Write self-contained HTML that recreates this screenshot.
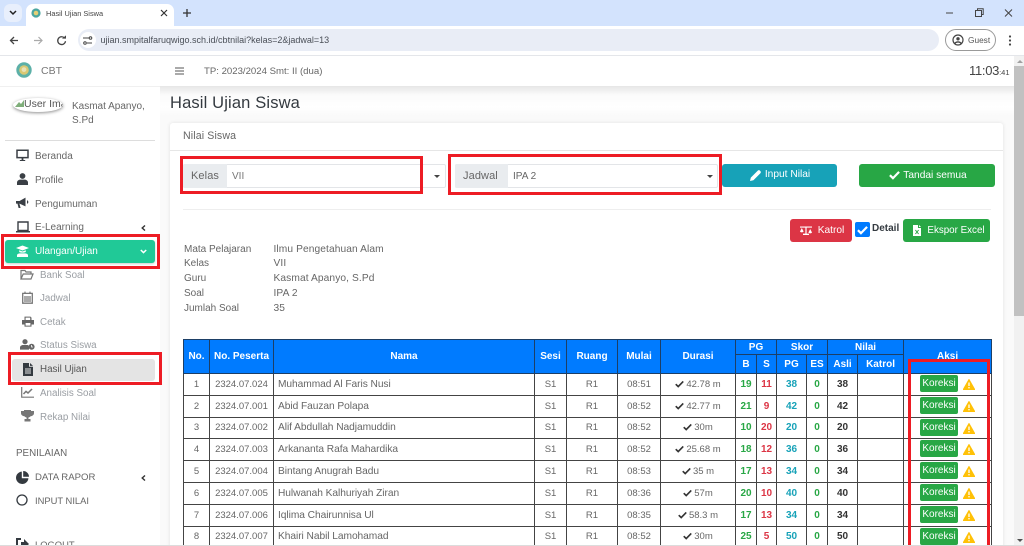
<!DOCTYPE html>
<html lang="id"><head><meta charset="utf-8"><title>Hasil Ujian Siswa</title>
<style>
*{box-sizing:border-box}
html,body{margin:0;padding:0;width:1024px;height:546px;overflow:hidden;background:#fff;font-family:"Liberation Sans",sans-serif;color:#6c757d;font-size:10.5px}
#p{position:absolute;left:0;top:0;width:1024px;height:546px;overflow:hidden;contain:paint}
.a{position:absolute;white-space:nowrap}
.r{position:absolute;border:3px solid #ed1c24;z-index:5}
svg{display:block}
.a svg{position:absolute}
.nav{position:absolute;left:35px;font-size:10px;color:#666;white-space:nowrap}
.sub{position:absolute;left:40px;font-size:9.8px;color:#9a9ea3;white-space:nowrap}
.ic{position:absolute}
table{border-collapse:collapse;table-layout:fixed;width:808px;position:absolute;left:183px;top:339px;background:#fff}
td,th{border:1px solid #444;padding:0;text-align:center;font-size:9.5px;white-space:nowrap;overflow:hidden}
th{background:#007bff;color:#fff;font-weight:bold;border-color:#1d3f66;font-size:10px}
tbody tr{height:21.8px}
td{color:#666}
td.n{text-align:left;padding-left:4px;font-size:10.2px;letter-spacing:-.05px}
td b{font-size:10px}
.g{color:#28a745}.d{color:#dc3545}.t{color:#17a2b8}.k{color:#333}
.ck{display:inline-block;vertical-align:-1px;margin-right:2px}
.ak{position:relative}
.ko{position:absolute;left:16px;top:1px;width:38px;height:17px;background:#28a745;border-radius:2px;color:#fff;font-size:10px;line-height:17px;text-align:center}
.wa{position:absolute;left:59px;top:5px}
.btn{position:absolute;border-radius:3px;color:#fff;font-size:10.2px;text-align:center;white-space:nowrap}
</style></head><body>
<div id="p">
<svg width="0" height="0" style="position:absolute"><defs>
<symbol id="c" viewBox="0 0 12 10"><path d="M1 5.2 4.3 8.5 11 1.6" fill="none" stroke="#333" stroke-width="2.2"/></symbol>
<symbol id="w" viewBox="0 0 12 11"><path d="M6 .5 11.8 10.6H.2Z" fill="#ffc107" stroke="#ffc107" stroke-linejoin="round"/><path d="M6 3.5V7M6 8V9.4" stroke="#fff" stroke-width="1.3"/></symbol>
</defs></svg>

<!-- browser chrome -->
<div class="a" style="left:0;top:0;width:1024px;height:26px;background:#d3e3fd"></div>
<div class="a" style="left:4px;top:4px;width:18px;height:18px;background:#e8effc;border-radius:6px"></div>
<svg class="a" style="left:9px;top:10px" width="8" height="6" viewBox="0 0 8 6"><path d="M1 1 4 4 7 1" fill="none" stroke="#222" stroke-width="1.5"/></svg>
<div class="a" style="left:26px;top:4px;width:148px;height:23px;background:#fff;border-radius:7px 7px 0 0"></div>
<svg class="a" style="left:31px;top:8px" width="10" height="10" viewBox="0 0 10 10"><circle cx="5" cy="5" r="4.6" fill="#4aa6a0"/><circle cx="5" cy="5" r="2.3" fill="#e4cf74"/></svg>
<div class="a" style="left:46px;top:8.5px;font-size:7.4px;color:#444">Hasil Ujian Siswa</div>
<svg class="a" style="left:160px;top:9px" width="8" height="8" viewBox="0 0 8 8"><path d="M1 1 7 7M7 1 1 7" stroke="#333" stroke-width="1.2"/></svg>
<svg class="a" style="left:183px;top:9px" width="8" height="8" viewBox="0 0 8 8"><path d="M4 0V8M0 4H8" stroke="#333" stroke-width="1.3"/></svg>
<svg class="a" style="left:946px;top:8px" width="70" height="10" viewBox="0 0 70 10"><path d="M0 5H7" stroke="#444" stroke-width="1"/><path d="M29.5 2.5H35.5V8.5H29.5ZM31.5 2.5V.8H37.2V6.5H35.5" fill="none" stroke="#444" stroke-width="1"/><path d="M59 1.5 66 8.5M66 1.5 59 8.5" stroke="#444" stroke-width="1"/></svg>
<div class="a" style="left:0;top:26px;width:1024px;height:29px;background:#fff;border-radius:8px 8px 0 0"></div>
<div class="a" style="left:0;top:55px;width:1024px;height:1px;background:#e4e6ea"></div>
<svg class="a" style="left:9px;top:35px" width="60" height="11" viewBox="0 0 60 11"><path d="M9 5.5H1.5M5 2 1.5 5.5 5 9" fill="none" stroke="#444" stroke-width="1.3"/><path d="M25 5.5H33M29.5 2 33 5.5 29.5 9" fill="none" stroke="#aaa" stroke-width="1.2"/><path d="M55.5 3A3.9 3.9 0 1 0 56.5 6.2" fill="none" stroke="#444" stroke-width="1.3"/><path d="M53 3.6H57V.4Z" fill="#444"/></svg>
<div class="a" style="left:78px;top:29px;width:861px;height:22px;background:#e9edf6;border-radius:11px"></div>
<div class="a" style="left:80px;top:32px;width:16px;height:16px;background:#fff;border-radius:50%"></div>
<svg class="a" style="left:83px;top:36px" width="10" height="9" viewBox="0 0 10 9"><path d="M0 2H6M9 7H4" stroke="#444" stroke-width="1"/><circle cx="7.5" cy="2" r="1.3" fill="none" stroke="#444"/><circle cx="2" cy="7" r="1.3" fill="none" stroke="#444"/></svg>
<div class="a" style="left:100.5px;top:35px;font-size:9px;color:#4a4f57">ujian.smpitalfaruqwigo.sch.id/cbtnilai?kelas=2&amp;jadwal=13</div>
<div class="a" style="left:945px;top:29px;width:51px;height:22px;border:1px solid #9a9a9a;border-radius:11px"></div>
<svg class="a" style="left:952px;top:34px" width="12" height="12" viewBox="0 0 12 12"><circle cx="6" cy="6" r="5" fill="none" stroke="#444" stroke-width="1.2"/><circle cx="6" cy="4.8" r="1.7" fill="#444"/><path d="M2.8 9.6C4 7.4 8 7.4 9.2 9.6" fill="none" stroke="#444" stroke-width="1.3"/></svg>
<div class="a" style="left:968px;top:35px;font-size:8.3px;color:#555">Guest</div>
<svg class="a" style="left:1008px;top:35px" width="4" height="11" viewBox="0 0 4 11"><circle cx="2" cy="1.5" r="1.1" fill="#444"/><circle cx="2" cy="5.5" r="1.1" fill="#444"/><circle cx="2" cy="9.5" r="1.1" fill="#444"/></svg>

<!-- content background -->
<div class="a" style="left:160px;top:86px;width:854px;height:460px;background:#fafafa"></div>
<div class="a" style="left:160px;top:86px;width:854px;height:30px;background:linear-gradient(#e6e6e6,#fbfbfb 30%,#fff 70%,#fafafa)"></div>

<!-- sidebar bg -->
<div class="a" style="left:0;top:56px;width:160px;height:490px;background:#fff"></div>

<!-- navbar -->
<div class="a" style="left:0;top:56px;width:1014px;height:30px;background:#fff"></div>
<svg class="a" style="left:16px;top:62px" width="16" height="16" viewBox="0 0 16 16"><circle cx="8" cy="8" r="7.7" fill="#5cb0a8"/><circle cx="8" cy="8" r="4.8" fill="#d9c873"/><circle cx="8" cy="7.6" r="2.4" fill="#e7e2b8"/></svg>
<div class="a" style="left:41px;top:64.5px;font-size:10.5px;color:#777">CBT</div>
<svg class="a" style="left:175px;top:67px" width="9" height="8" viewBox="0 0 9 8"><path d="M0 1H9M0 4H9M0 7H9" stroke="#777" stroke-width="1.2"/></svg>
<div class="a" style="left:204px;top:65.5px;font-size:9.6px;color:#666">TP: 2023/2024 Smt: II (dua)</div>
<div class="a" style="left:969px;top:63px;font-size:13px;letter-spacing:-.3px;color:#444">11:03<span style="font-size:7.5px;letter-spacing:0">:41</span></div>

<!-- sidebar -->
<div class="a" style="left:0;top:86px;width:160px;height:1px;background:#f0f0f0"></div>
<div class="a" style="left:13px;top:98px;width:50px;height:14px;border-radius:50%/50%;box-shadow:0 1px 3px rgba(0,0,0,.45);overflow:hidden;background:#fff;font-size:10.5px;line-height:12px;color:#555;padding-left:11px">User Image</div>
<svg class="a" style="left:15px;top:100px" width="9" height="7" viewBox="0 0 9 7"><path d="M0 7 4 2 6 4 9 0V7Z" fill="#7fae7a"/></svg>
<div class="a" style="left:72px;top:100px;font-size:10px;line-height:13.5px;color:#666">Kasmat Apanyo,<br>S.Pd</div>
<div class="a" style="left:5px;top:140px;width:150px;height:1px;background:#ddd"></div>

<svg class="ic" style="left:16px;top:149px" width="13" height="13" viewBox="0 0 13 13"><path d="M1 1.2H12V8.6H1Z" fill="none" stroke="#3a3f45" stroke-width="1.5"/><path d="M5.6 9V11H3.8V12H9.2V11H7.4V9Z" fill="#3a3f45"/></svg>
<div class="nav" style="top:151px">Beranda</div>
<svg class="ic" style="left:17px;top:173px" width="11" height="12" viewBox="0 0 11 12"><circle cx="5.5" cy="3" r="2.9" fill="#3a3f45"/><path d="M0 12V9.5C0 7.5 2 6.6 3.5 6.6H7.5C9 6.6 11 7.5 11 9.5V12Z" fill="#3a3f45"/></svg>
<div class="nav" style="top:175px">Profile</div>
<svg class="ic" style="left:16px;top:197px" width="13" height="12" viewBox="0 0 13 12"><path d="M0 4H3.5L9.5 .6V9.4L3.5 6.6H3.4L4.6 11H2.6L1.5 6.6H0Z M11 3.2C12.8 3.8 12.8 6.2 11 6.8Z" fill="#3a3f45"/></svg>
<div class="nav" style="top:199px">Pengumuman</div>
<svg class="ic" style="left:16px;top:221px" width="14" height="12" viewBox="0 0 14 12"><path d="M2 1H12V9.4H2Z" fill="none" stroke="#3a3f45" stroke-width="1.4"/><path d="M0 10H14V11.5H0Z" fill="#3a3f45"/></svg>
<div class="nav" style="top:222px">E-Learning</div>
<svg class="ic" style="left:141px;top:225px" width="5" height="6" viewBox="0 0 5 6"><path d="M4 .5 1.2 3 4 5.5" fill="none" stroke="#333" stroke-width="1.4"/></svg>

<div class="a" style="left:5px;top:240px;width:150px;height:23px;background:#20c997;border-radius:3px;box-shadow:0 1px 2px rgba(0,0,0,.2)"></div>
<svg class="ic" style="left:16px;top:245px" width="13" height="12" viewBox="0 0 13 12"><path d="M6.5 .5 13 3 6.5 5.5 0 3Z" fill="#fff"/><path d="M3.2 5.2V6.6C3.2 8 9.8 8 9.8 6.6V5.2L6.5 6.5Z" fill="#fff"/><path d="M1 12V10.2C1 9 3 8.4 4 8.4H9C10 8.4 12 9 12 10.2V12Z" fill="#fff"/></svg>
<div class="nav" style="top:245.5px;color:#fff">Ulangan/Ujian</div>
<svg class="ic" style="left:140px;top:249px" width="7" height="5" viewBox="0 0 7 5"><path d="M.8 1 3.5 3.6 6.2 1" fill="none" stroke="#fff" stroke-width="1.5"/></svg>
<div class="r" style="left:1px;top:234px;width:159px;height:35px"></div>

<svg class="ic" style="left:20px;top:269px" width="14" height="11" viewBox="0 0 14 11"><path d="M1 10V1.5H5L6 3H11V5M1 10 3.2 5H13L11 10Z" fill="none" stroke="#777" stroke-width="1.2"/></svg>
<div class="sub" style="top:270px">Bank Soal</div>
<svg class="ic" style="left:22px;top:291px" width="11" height="13" viewBox="0 0 11 13"><path d="M.7 2.4H10.3V12.2H.7Z" fill="none" stroke="#777" stroke-width="1.3"/><path d="M3 .6V3M8 .6V3M2 6H9M2 8H9M2 10H9" stroke="#777" stroke-width="1.2"/></svg>
<div class="sub" style="top:293px">Jadwal</div>
<svg class="ic" style="left:22px;top:316px" width="12" height="11" viewBox="0 0 12 11"><path d="M2.5 4V.6H8.5L9.5 1.6V4H12V8.5H9.5V10.6H2.5V8.5H0V4Z" fill="#666"/><path d="M3.6 1.6H8.2V4H3.6ZM3.6 7H8.4V9.6H3.6Z" fill="#fff"/></svg>
<div class="sub" style="top:317px">Cetak</div>
<svg class="ic" style="left:20px;top:339px" width="15" height="11" viewBox="0 0 15 11"><circle cx="5" cy="2.7" r="2.6" fill="#666"/><path d="M0 10.6V8.4C0 6.8 2 6 3 6H7.4C8.6 6 9 7 9 8V10.6Z" fill="#666"/><circle cx="11.6" cy="7.8" r="3" fill="#666"/><path d="M11.6 6V8H13" stroke="#fff" stroke-width=".8" fill="none"/></svg>
<div class="sub" style="top:340px">Status Siswa</div>

<div class="a" style="left:12px;top:359px;width:143px;height:22px;background:#e4e4e4;border-radius:3px"></div>
<svg class="ic" style="left:23px;top:363px" width="10" height="13" viewBox="0 0 10 13"><path d="M0 0H6V3.8H10V13H0ZM7 0 10 2.9H7Z" fill="#343a40"/><path d="M2 6H8M2 8H8M2 10H8" stroke="#e4e4e4" stroke-width=".9"/></svg>
<div class="sub" style="top:364px;color:#555">Hasil Ujian</div>
<div class="r" style="left:8px;top:352px;width:154px;height:33px"></div>

<svg class="ic" style="left:21px;top:387px" width="13" height="11" viewBox="0 0 13 11"><path d="M.7 0V10.2H13" fill="none" stroke="#777" stroke-width="1.2"/><path d="M2.5 7 5 4.4 7 6 11 2" fill="none" stroke="#777" stroke-width="1.5"/></svg>
<div class="sub" style="top:388px">Analisis Soal</div>
<svg class="ic" style="left:21px;top:410px" width="13" height="12" viewBox="0 0 13 12"><path d="M3 0H10V1H13V3C13 5 11.5 6 9.6 6.3 9 7.2 8 7.4 7.4 7.6V9H9.5V11.5H3.5V9H5.6V7.6C5 7.4 4 7.2 3.4 6.3 1.5 6 0 5 0 3V1H3Z" fill="#777"/></svg>
<div class="sub" style="top:412px">Rekap Nilai</div>

<div class="a" style="left:16px;top:448px;font-size:9.8px;color:#666">PENILAIAN</div>
<svg class="ic" style="left:16px;top:471px" width="13" height="13" viewBox="0 0 13 13"><path d="M5.8 .6V7.2H12.4A6.2 6.2 0 1 1 5.8 .6Z" fill="#343a40"/><path d="M7.2 0A5.8 5.8 0 0 1 13 5.8H7.2Z" fill="#343a40"/></svg>
<div class="nav" style="top:472px;font-size:9.6px">DATA RAPOR</div>
<svg class="ic" style="left:141px;top:475px" width="5" height="6" viewBox="0 0 5 6"><path d="M4 .5 1.2 3 4 5.5" fill="none" stroke="#333" stroke-width="1.4"/></svg>
<svg class="ic" style="left:16px;top:494px" width="12" height="12" viewBox="0 0 12 12"><circle cx="6" cy="6" r="5" fill="none" stroke="#343a40" stroke-width="1.3"/></svg>
<div class="nav" style="top:495px;font-size:9.4px">INPUT NILAI</div>
<svg class="ic" style="left:16px;top:538px" width="13" height="12" viewBox="0 0 13 12"><path d="M5 1H1V11H5" fill="none" stroke="#343a40" stroke-width="2"/><path d="M5 4H8V1L13 6 8 11V8H5Z" fill="#343a40"/></svg>
<div class="nav" style="top:539px;font-size:9.4px">LOGOUT</div>

<!-- title -->
<div class="a" style="left:170px;top:93.5px;font-size:16.5px;color:#343a40;letter-spacing:.15px">Hasil Ujian Siswa</div>

<!-- card -->
<div class="a" style="left:170px;top:123px;width:833px;height:430px;background:#fff;border-radius:3px;box-shadow:0 0 4px rgba(0,0,0,.1)"></div>
<div class="a" style="left:170px;top:150px;width:833px;height:1px;background:#e6e6e6"></div>
<div class="a" style="left:183px;top:130px;font-size:10.6px;color:#666;letter-spacing:.12px">Nilai Siswa</div>

<!-- filter -->
<div class="a" style="left:183px;top:164px;width:263px;height:24px;border:1px solid #e3e5e8;border-radius:2px;background:#fff"></div>
<div class="a" style="left:183px;top:164px;width:44px;height:24px;background:#e9ecef;border-radius:2px 0 0 2px;font-size:11px;line-height:25px;padding-left:8px;color:#666;letter-spacing:.1px">Kelas</div>
<div class="a" style="left:232px;top:171px;font-size:10px;color:#777">VII</div>
<div class="a" style="left:434px;top:175px;border-left:3px solid transparent;border-right:3px solid transparent;border-top:3px solid #444"></div>
<div class="a" style="left:455px;top:164px;width:263px;height:24px;border:1px solid #e3e5e8;border-radius:2px;background:#fff"></div>
<div class="a" style="left:455px;top:164px;width:53px;height:24px;background:#e9ecef;border-radius:2px 0 0 2px;font-size:11px;line-height:25px;padding-left:8px;color:#666;letter-spacing:.1px">Jadwal</div>
<div class="a" style="left:513px;top:171px;font-size:10px;color:#666">IPA 2</div>
<div class="a" style="left:707px;top:175px;border-left:3px solid transparent;border-right:3px solid transparent;border-top:3px solid #444"></div>
<div class="r" style="left:180px;top:156px;width:243px;height:38px"></div>
<div class="r" style="left:448px;top:154px;width:274px;height:41px"></div>

<div class="btn" style="left:722px;top:164px;width:115px;height:23px;background:#17a2b8;line-height:22.5px;padding-left:16px">Input Nilai</div>
<svg class="a" style="left:750px;top:170px" width="11" height="11" viewBox="0 0 11 11"><path d="M0 11 .8 7.6 7.8.6C8.5 0 9.4 0 10 .7L10.4 1.1C11 1.7 11 2.6 10.4 3.2L3.4 10.2Z" fill="#fff"/></svg>
<div class="btn" style="left:859px;top:164px;width:136px;height:23px;background:#28a745;line-height:23px;padding-left:16px">Tandai semua</div>
<svg class="a" style="left:889px;top:170px" width="11" height="10" viewBox="0 0 12 10"><path d="M1 5.2 4.3 8.5 11 1.6" fill="none" stroke="#fff" stroke-width="2.4"/></svg>

<div class="a" style="left:183px;top:209px;width:808px;height:1px;background:#eee"></div>

<div class="btn" style="left:790px;top:219px;width:62px;height:23px;background:#dc3545;line-height:24px;padding-left:20px">Katrol</div>
<svg class="a" style="left:800px;top:225px" width="12" height="10" viewBox="0 0 12 10"><path d="M0 1.5H12V2.6H6.6V8.6H9V10H3V8.6H5.4V2.6H0Z" fill="#fff"/><path d="M0 6.5 1.8 3 3.6 6.5C3 7.6.6 7.6 0 6.5ZM8.4 7.5 10.2 4 12 7.5C11.4 8.6 9 8.6 8.4 7.5Z" fill="#fff"/></svg>
<div class="a" style="left:855px;top:222px;width:15px;height:15px;background:#007bff;border-radius:2px"></div>
<svg class="a" style="left:857px;top:225px" width="11" height="10" viewBox="0 0 12 10"><path d="M1 5.2 4.3 8.5 11 1.6" fill="none" stroke="#fff" stroke-width="2.4"/></svg>
<div class="a" style="left:872px;top:222.5px;font-size:10px;font-weight:bold;color:#343a40">Detail</div>
<div class="btn" style="left:903px;top:219px;width:87px;height:23px;background:#28a745;line-height:24px;padding-left:19px;font-size:9.8px">Ekspor Excel</div>
<svg class="a" style="left:913px;top:225px" width="8" height="11" viewBox="0 0 8 11"><path d="M0 0H5V3H8V11H0ZM6 0 8 2H6Z" fill="#fff"/><path d="M2.4 5 5.6 9M5.6 5 2.4 9" stroke="#28a745"/></svg>

<!-- info -->
<div class="a" style="left:184px;top:242.5px;font-size:10px;line-height:14.8px;color:#666">Mata Pelajaran<br>Kelas<br>Guru<br>Soal<br>Jumlah Soal</div>
<div class="a" style="left:273.5px;top:242.5px;font-size:10.2px;line-height:14.8px;color:#666;letter-spacing:.1px">Ilmu Pengetahuan Alam<br>VII<br>Kasmat Apanyo, S.Pd<br>IPA 2<br>35</div>

<!-- table -->
<table>
<colgroup><col style="width:26px"><col style="width:64px"><col style="width:261px"><col style="width:32px"><col style="width:51px"><col style="width:43px"><col style="width:75px"><col style="width:21px"><col style="width:20px"><col style="width:30px"><col style="width:21px"><col style="width:30px"><col style="width:46px"><col style="width:88px"></colgroup>
<thead>
<tr style="height:15px"><th rowspan="2">No.</th><th rowspan="2">No. Peserta</th><th rowspan="2">Nama</th><th rowspan="2">Sesi</th><th rowspan="2">Ruang</th><th rowspan="2">Mulai</th><th rowspan="2">Durasi</th><th colspan="2">PG</th><th colspan="2">Skor</th><th colspan="2">Nilai</th><th rowspan="2">Aksi</th></tr>
<tr style="height:19px"><th>B</th><th>S</th><th>PG</th><th>ES</th><th>Asli</th><th>Katrol</th></tr>
</thead>
<tbody>
<tr><td>1</td><td>2324.07.024</td><td class="n">Muhammad Al Faris Nusi</td><td>S1</td><td>R1</td><td>08:51</td><td><svg class="ck" width="9" height="8"><use href="#c"/></svg>42.78 m</td><td><b class="g">19</b></td><td><b class="d">11</b></td><td><b class="t">38</b></td><td><b class="g">0</b></td><td><b class="k">38</b></td><td></td><td class="ak"><div class="ko">Koreksi</div><svg class="wa" width="12" height="11"><use href="#w"/></svg></td></tr>
<tr><td>2</td><td>2324.07.001</td><td class="n">Abid Fauzan Polapa</td><td>S1</td><td>R1</td><td>08:52</td><td><svg class="ck" width="9" height="8"><use href="#c"/></svg>42.77 m</td><td><b class="g">21</b></td><td><b class="d">9</b></td><td><b class="t">42</b></td><td><b class="g">0</b></td><td><b class="k">42</b></td><td></td><td class="ak"><div class="ko">Koreksi</div><svg class="wa" width="12" height="11"><use href="#w"/></svg></td></tr>
<tr><td>3</td><td>2324.07.002</td><td class="n">Alif Abdullah Nadjamuddin</td><td>S1</td><td>R1</td><td>08:52</td><td><svg class="ck" width="9" height="8"><use href="#c"/></svg>30m</td><td><b class="g">10</b></td><td><b class="d">20</b></td><td><b class="t">20</b></td><td><b class="g">0</b></td><td><b class="k">20</b></td><td></td><td class="ak"><div class="ko">Koreksi</div><svg class="wa" width="12" height="11"><use href="#w"/></svg></td></tr>
<tr><td>4</td><td>2324.07.003</td><td class="n">Arkananta Rafa Mahardika</td><td>S1</td><td>R1</td><td>08:52</td><td><svg class="ck" width="9" height="8"><use href="#c"/></svg>25.68 m</td><td><b class="g">18</b></td><td><b class="d">12</b></td><td><b class="t">36</b></td><td><b class="g">0</b></td><td><b class="k">36</b></td><td></td><td class="ak"><div class="ko">Koreksi</div><svg class="wa" width="12" height="11"><use href="#w"/></svg></td></tr>
<tr><td>5</td><td>2324.07.004</td><td class="n">Bintang Anugrah Badu</td><td>S1</td><td>R1</td><td>08:53</td><td><svg class="ck" width="9" height="8"><use href="#c"/></svg>35 m</td><td><b class="g">17</b></td><td><b class="d">13</b></td><td><b class="t">34</b></td><td><b class="g">0</b></td><td><b class="k">34</b></td><td></td><td class="ak"><div class="ko">Koreksi</div><svg class="wa" width="12" height="11"><use href="#w"/></svg></td></tr>
<tr><td>6</td><td>2324.07.005</td><td class="n">Hulwanah Kalhuriyah Ziran</td><td>S1</td><td>R1</td><td>08:36</td><td><svg class="ck" width="9" height="8"><use href="#c"/></svg>57m</td><td><b class="g">20</b></td><td><b class="d">10</b></td><td><b class="t">40</b></td><td><b class="g">0</b></td><td><b class="k">40</b></td><td></td><td class="ak"><div class="ko">Koreksi</div><svg class="wa" width="12" height="11"><use href="#w"/></svg></td></tr>
<tr><td>7</td><td>2324.07.006</td><td class="n">Iqlima Chairunnisa Ul</td><td>S1</td><td>R1</td><td>08:35</td><td><svg class="ck" width="9" height="8"><use href="#c"/></svg>58.3 m</td><td><b class="g">17</b></td><td><b class="d">13</b></td><td><b class="t">34</b></td><td><b class="g">0</b></td><td><b class="k">34</b></td><td></td><td class="ak"><div class="ko">Koreksi</div><svg class="wa" width="12" height="11"><use href="#w"/></svg></td></tr>
<tr><td>8</td><td>2324.07.007</td><td class="n">Khairi Nabil Lamohamad</td><td>S1</td><td>R1</td><td>08:52</td><td><svg class="ck" width="9" height="8"><use href="#c"/></svg>30m</td><td><b class="g">25</b></td><td><b class="d">5</b></td><td><b class="t">50</b></td><td><b class="g">0</b></td><td><b class="k">50</b></td><td></td><td class="ak"><div class="ko">Koreksi</div><svg class="wa" width="12" height="11"><use href="#w"/></svg></td></tr>
</tbody></table>
<div class="r" style="left:908px;top:359px;width:82px;height:200px"></div>

<!-- scrollbar -->
<div class="a" style="left:1014px;top:56px;width:10px;height:490px;background:#f1f1f1"></div>
<div class="a" style="left:1014px;top:66px;width:10px;height:250px;background:#c1c1c1"></div>
<div class="a" style="left:1017px;top:60px;border-left:3px solid transparent;border-right:3px solid transparent;border-bottom:3px solid #a0a0a0"></div>
<div class="a" style="left:1017px;top:539px;border-left:3px solid transparent;border-right:3px solid transparent;border-top:3px solid #505050"></div>
<div class="a" style="left:0;top:545px;width:1024px;height:1px;background:#dcdcdc;z-index:9"></div>
</div>
</body></html>
